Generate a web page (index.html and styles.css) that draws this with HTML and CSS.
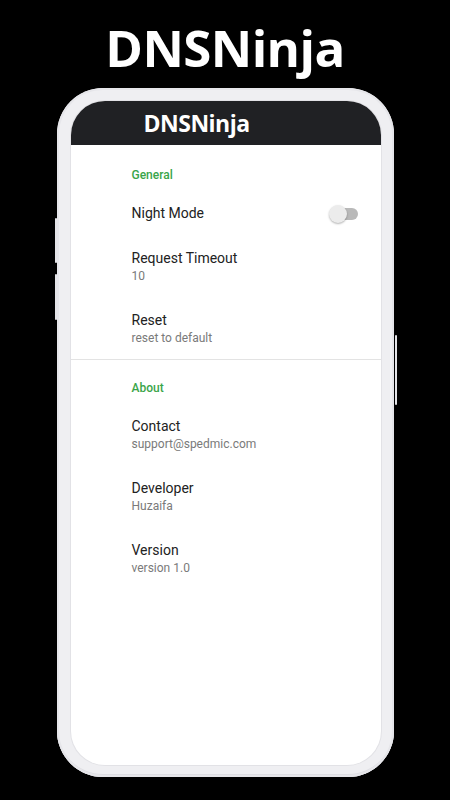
FILE: index.html
```html
<!DOCTYPE html>
<html lang="en">
<head>
    <meta charset="UTF-8">
    <meta name="viewport" content="width=device-width, initial-scale=1.0">
    <title>DNSNinja</title>
    <link rel="stylesheet" href="styles.css">
</head>
<body>

    <h1 class="promo-title">DNSNinja</h1>

    <div class="phone">
        <span class="side-btn left-top"></span>
        <span class="side-btn left-bottom"></span>
        <span class="side-btn right"></span>

        <div class="screen">
            <div class="app-bar">DNSNinja</div>

            <div class="pref-category first">General</div>

            <div class="pref-row single">
                <div class="pref-text">
                    <div class="pref-title">Night Mode</div>
                </div>
                <div class="switch">
                    <span class="switch-track"></span>
                    <span class="switch-thumb"></span>
                </div>
            </div>

            <div class="pref-row">
                <div class="pref-text">
                    <div class="pref-title">Request Timeout</div>
                    <div class="pref-summary">10</div>
                </div>
            </div>

            <div class="pref-row">
                <div class="pref-text">
                    <div class="pref-title">Reset</div>
                    <div class="pref-summary">reset to default</div>
                </div>
            </div>

            <div class="divider"></div>

            <div class="pref-category">About</div>

            <div class="pref-row">
                <div class="pref-text">
                    <div class="pref-title">Contact</div>
                    <div class="pref-summary">support@spedmic.com</div>
                </div>
            </div>

            <div class="pref-row">
                <div class="pref-text">
                    <div class="pref-title">Developer</div>
                    <div class="pref-summary">Huzaifa</div>
                </div>
            </div>

            <div class="pref-row">
                <div class="pref-text">
                    <div class="pref-title">Version</div>
                    <div class="pref-summary">version 1.0</div>
                </div>
            </div>
        </div>
    </div>

</body>
</html>
```

FILE: styles.css
```css
body {
    margin: 0;
    background: #000;
    font-family: Roboto, "Liberation Sans", sans-serif;
    display: flex;
    flex-direction: column;
    align-items: center;
    height: 800px;
    overflow: hidden;
}

.promo-title {
    margin: 17px 0 0;
    height: 71px;
    line-height: 60px;
    font-family: "Open Sans", sans-serif;
    font-weight: 700;
    font-size: 51px;
    letter-spacing: -0.6px;
    color: #fff;
}

.phone {
    position: relative;
    width: 337px;
    height: 689px;
    box-sizing: border-box;
    padding: 13px 13px 12px 14px;
    border-radius: 46px;
    background: #efeff2;
    box-shadow: inset 0 0 0 2px #e6e6ea, inset 0 -3px 0 #dedee3;
}

.side-btn {
    position: absolute;
    width: 2px;
    background: #e4e4e8;
    border-radius: 1px;
}

.side-btn.left-top {
    left: -2px;
    top: 130px;
    height: 45px;
}

.side-btn.left-bottom {
    left: -2px;
    top: 186px;
    height: 46px;
}

.side-btn.right {
    right: -3px;
    top: 247px;
    height: 70px;
}

.screen {
    height: 100%;
    background: #fff;
    border-radius: 34px;
    overflow: hidden;
    box-shadow: 0 0 0 1px #e2e2e6;
}

.app-bar {
    height: 44px;
    background: #202124;
    color: #fff;
    padding-left: 73px;
    display: flex;
    align-items: center;
    font-family: "Open Sans", sans-serif;
    font-weight: 700;
    font-size: 23px;
    letter-spacing: -0.5px;
}

.pref-category {
    padding: 20px 0 7px 61px;
    line-height: 16px;
    font-size: 12px;
    font-weight: 500;
    color: #3aa54a;
}

.pref-category.first {
    padding-top: 22px;
    padding-bottom: 6px;
}

.pref-row {
    display: flex;
    align-items: center;
    padding: 14px 23px 13px 61px;
}

.pref-row.single {
    padding-top: 15px;
    padding-bottom: 12px;
}

.pref-text {
    flex: 1;
}

.pref-title {
    font-size: 14px;
    line-height: 19px;
    color: #222;
}

.pref-summary {
    font-size: 12px;
    line-height: 16px;
    color: #7a7a7a;
}

.switch {
    position: relative;
    width: 29px;
    height: 18px;
}

.switch-track {
    position: absolute;
    right: 0;
    top: 3px;
    width: 24px;
    height: 12px;
    border-radius: 6px;
    background: #b9b9b9;
}

.switch-thumb {
    position: absolute;
    left: 0;
    top: 0;
    width: 18px;
    height: 18px;
    border-radius: 50%;
    background: #ececec;
    box-shadow: 0 1px 2px rgba(0, 0, 0, 0.3);
}

.divider {
    height: 1px;
    background: #e3e3e3;
}
```
